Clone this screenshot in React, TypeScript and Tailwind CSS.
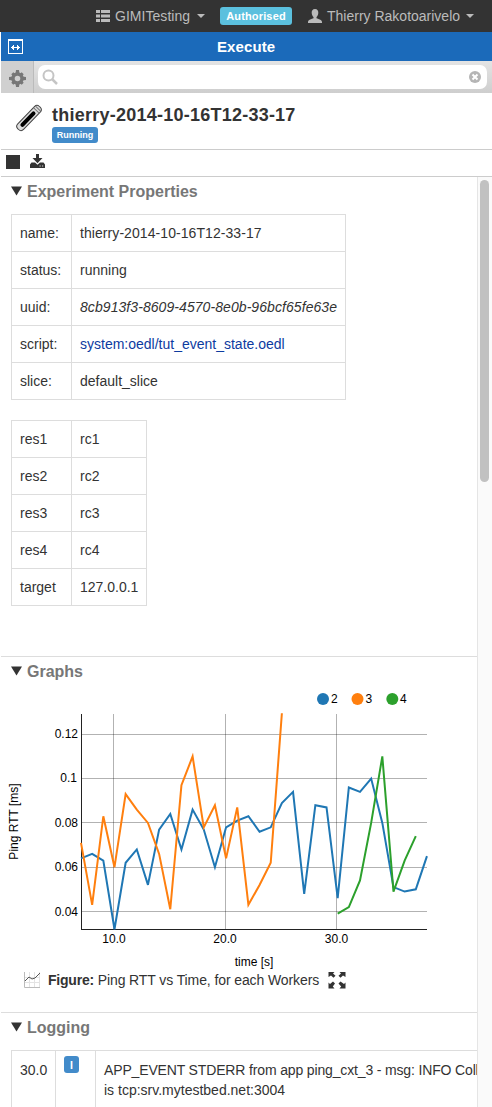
import React from "react";

const blue = [64, 66, 63, 32, 62, 68, 52, 77, 84, 68, 86, 77, 60, 78, 81, 83, 76, 78, 89, 94, 48, 88, 87, 46, 96, 94, 100, 80, 51, 49, 50, 65];
const orange = [71, 43, 83, 60, 93, 86, 80, 66, 41, 97, 110, 78, 88, 64, 87, 43, 52, 62, 129.5];
const green = [39, 42, 54, 80, 110, 49, 63, 74];

const points = (start: number, values: number[]) =>
  values.map((v, i) => `${(81 + (start + i - 7) * 11.16).toFixed(2)},${(231.5 - (v - 40) * 2.215).toFixed(2)}`).join(" ");

function Chart() {
  return (
    <svg width="476" height="290" viewBox="1 0 476 290" className="block" fontSize="12" fill="#000">
      <g stroke="#000" strokeOpacity="0.3" shapeRendering="crispEdges">
        {[54.5, 98.5, 142.5, 187.5, 231.5].map((y) => <line key={y} x1="81" x2="427" y1={y} y2={y} />)}
        {[113.5, 225.5, 336.5].map((x) => <line key={x} x1={x} x2={x} y1="34" y2="249" />)}
      </g>
      <path d="M81.5 34V249.5H427" fill="none" stroke="#222" shapeRendering="crispEdges" />
      <g fill="none" strokeWidth="2">
        <polyline points={points(7, blue)} stroke="#1f77b4" />
        <polyline points={points(7, orange)} stroke="#ff7f0e" />
        <polyline points={points(30, green)} stroke="#2ca02c" />
      </g>
      <g textAnchor="end">
        <text x="78" y="58">0.12</text>
        <text x="77" y="102">0.1</text>
        <text x="78" y="147">0.08</text>
        <text x="78" y="191">0.06</text>
        <text x="78" y="236">0.04</text>
      </g>
      <g textAnchor="middle">
        <text x="114" y="263">10.0</text>
        <text x="225" y="263">20.0</text>
        <text x="336.5" y="263">30.0</text>
        <text x="254" y="286">time [s]</text>
        <text transform="translate(18 141.5) rotate(-90)">Ping RTT [ms]</text>
      </g>
      <circle cx="323" cy="19" r="6" fill="#1f77b4" />
      <text x="331" y="23">2</text>
      <circle cx="357.5" cy="19" r="6" fill="#ff7f0e" />
      <text x="365.5" y="23">3</text>
      <circle cx="392.3" cy="19" r="6" fill="#2ca02c" />
      <text x="400" y="23">4</text>
    </svg>
  );
}

function Caret() {
  return <span className="-mt-px h-0 w-0 border-x-4 border-t-4 border-x-transparent border-t-[#bbb]" />;
}

function Heading({ children }: { children: React.ReactNode }) {
  return (
    <h2 className="flex h-[28px] items-center pl-[10px] text-[16px] font-bold text-[#777]">
      <svg width="11" height="10" className="mr-[5px]"><path d="M0 .5h11L5.5 9.5z" fill="#333" /></svg>
      <span className="pt-px">{children}</span>
    </h2>
  );
}

function Properties({ rows, last }: { rows: [string, React.ReactNode][]; last: string }) {
  return (
    <table className="ml-[10px] border-collapse">
      <tbody>
        {rows.map(([k, v]) => (
          <tr key={k} className="h-[37px]">
            <td className="w-[60px] border border-[#ddd] p-0 pl-2">{k}</td>
            <td className={`${last} border border-[#ddd] p-0 pl-2`}>{v}</td>
          </tr>
        ))}
      </tbody>
    </table>
  );
}

export default function App() {
  return (
    <div className="flex h-[1107px] w-[492px] flex-col overflow-hidden bg-white font-['Liberation_Sans',Arial,sans-serif] text-[14px] leading-5 text-[#333]">
      <header className="flex h-8 shrink-0 items-center bg-[#333] pl-[96px] text-[#bbb]">
        <svg width="14" height="12" fill="#bbb" className="-mt-px mr-[5px]">
          <path d="M0 0h4v3H0zM5 0h9v3H5zM0 4.500h4v3H0zM5 4.500h9v3H5zM0 9h4v3H0zM5 9h9v3H5z" />
        </svg>
        <span className="w-[82px] whitespace-nowrap tracking-[0.04px]">GIMITesting</span>
        <Caret />
        <span className="ml-[15px] flex h-[18px] w-[72px] items-center justify-center rounded-[3px] bg-[#5bc0de] text-[11px] font-bold tracking-[0.15px] text-white">Authorised</span>
        <svg width="14" height="14" viewBox="0 0 14 14" fill="#bbb" className="-mt-px ml-[16px] mr-[5px]">
          <path d="M7 0c2.400 0 3.500 1.700 3.300 4-.2 2-1 3.400-1.800 4v1.200c1.700.8 5.500 1.500 5.500 3.800v1H0v-1c0-2.300 3.800-3 5.500-3.800V8c-.8-.6-1.600-2-1.800-4C3.500 1.700 4.600 0 7 0z" />
        </svg>
        <span className="w-[139px] whitespace-nowrap">Thierry Rakotoarivelo</span>
        <Caret />
      </header>

      <div className="ml-px flex h-[29px] shrink-0 items-center bg-[#1b6aba] pl-[7px] text-white">
        <svg width="15" height="15" fill="none" stroke="#fff" shapeRendering="crispEdges">
          <path d="M.5 .5h14v14H.5zM0 1.500h15M3 8.500h9M5.500 6v5M4.500 7v3M9.500 6v5M10.500 7v3" />
        </svg>
        <h1 className="ml-[194px] pt-px text-[15px] font-bold tracking-[0.1px]">Execute</h1>
      </div>

      <div className="ml-px flex h-8 shrink-0 bg-gradient-to-b from-[#e4e4e4] to-[#cecece]">
        <div className="flex w-[33px] items-center justify-center border-r border-[#bbb] bg-[#d0d0d0] pt-[2px]">
          <svg width="17" height="17" viewBox="0 0 17 17">
            <path
              fill="#777"
              d="M7 0h3l.5 4h-4zM7 17h3l.5-4h-4zM0 7v3l4 .5v-4zM17 7v3l-4 .5v-4zM2.300 4.300l2-2L7.500 5 5 7.500zM12.700 2.300l2 2L12 7.500 9.500 5zM14.700 12.700l-2 2L9.500 12 12 9.500zM4.300 14.700l-2-2L5 9.500 7.500 12z"
            />
            <circle cx="8.5" cy="8.5" r="4.5" fill="#d0d0d0" stroke="#777" strokeWidth="3.4" />
          </svg>
        </div>
        <div className="my-1 ml-[4px] mr-[5px] flex flex-1 items-center rounded-[7px] bg-white pl-[4px] pr-[6px]">
          <svg width="16" height="16" fill="none" stroke="#c5c5c5" strokeWidth="2">
            <circle cx="6.5" cy="6.5" r="5" /><path d="M10 10l5 5" strokeWidth="2.5" />
          </svg>
          <svg width="12" height="12" viewBox="0 0 12 12" className="ml-auto">
            <circle cx="6" cy="6" r="6" fill="#b5b5b5" /><path d="M3.500 3.500l5 5M8.500 3.500l-5 5" stroke="#fff" strokeWidth="2" />
          </svg>
        </div>
      </div>

      <div className="ml-px flex h-[57px] shrink-0 border-b border-[#ccc] pl-[14px]">
        <svg width="28" height="28" viewBox="0 0 28 28" className="mt-[11px]">
          <g transform="translate(14 14) rotate(-46)">
            <rect x="-15.5" y="-4" width="31" height="8" rx="3.5" fill="#ddd" stroke="#444" />
            <path d="M10.500-4v8M13-3.500v7" stroke="#777" />
            <rect x="-11.5" y="-2" width="20" height="4" rx="2" fill="#000" />
          </g>
        </svg>
        <div className="ml-[9px] pt-[11px]">
          <div className="text-[18px] font-bold leading-[22px] tracking-[0.24px]">thierry-2014-10-16T12-33-17</div>
          <div className="mt-px flex h-[16px] w-[46px] items-center justify-center rounded-[3px] bg-[#428bca] text-[9px] font-bold text-white">Running</div>
        </div>
      </div>

      <div className="ml-px flex h-[27px] shrink-0 items-start border-b border-[#ccc] pl-[5px] pt-[4px]">
        <span className="mt-px h-[14px] w-[14px] bg-[#333]" />
        <svg width="15" height="14" fill="#333" className="ml-[10px]">
          <path d="M6 0h3v4h3.500L7.500 9.200 2.500 4H6z" /><path d="M1.500 8.500H5l2.500 2.200L10 8.500h3.500L15 10.500V14H0v-3.500z" /><path d="M9.500 12h1.200M12 12h1.200" stroke="#ddd" />
        </svg>
      </div>

      <main className="ml-px flex min-h-0 flex-1">
        <div className="w-[476px] shrink-0 overflow-hidden">
          <section className="h-[479px]">
            <Heading>Experiment Properties</Heading>
            <div className="pt-[9px]">
              <Properties
                last="w-[274px]"
                rows={[
                  ["name:", <span key="n" className="tracking-[0.07px]">thierry-2014-10-16T12-33-17</span>],
                  ["status:", "running"],
                  ["uuid:", <i key="u" className="tracking-[0.07px]">8cb913f3-8609-4570-8e0b-96bcf65fe63e</i>],
                  ["script:", <a key="s" className="text-[#0d3b9f]">system:oedl/tut_event_state.oedl</a>],
                  ["slice:", "default_slice"],
                ]}
              />
            </div>
            <div className="pt-5">
              <Properties last="w-[75px]" rows={[["res1", "rc1"], ["res2", "rc2"], ["res3", "rc3"], ["res4", "rc4"], ["target", "127.0.0.1"]]} />
            </div>
          </section>
          <section className="h-[356px] border-t border-[#ddd]">
            <Heading>Graphs</Heading>
            <div className="-mt-[5px]"><Chart /></div>
            <div className="flex h-5 items-center pl-[23px]">
              <svg width="16" height="16" fill="none">
                <path d="M5.500 0v16M10.500 0v16M0 5.500h16M0 10.500h16M15.500 0v16" stroke="#e3e3e3" />
                <path d="M.5 0v15.500H16" stroke="#bbb" /><path d="M1 9l4-4 3 2 3-1 5-5" stroke="#555" />
              </svg>
              <span className="ml-[8px] w-[280px] whitespace-nowrap tracking-[-0.1px]"><b className="tracking-[-0.22px]">Figure:</b> Ping RTT vs Time, for each Workers</span>
              <svg width="18" height="18" fill="#333">
                <path d="M.5 1h6L5 2.500l2.500 2.300-2 2L3 4.500.500 6zM17.500 1v5L15 4.500l-2.500 2.300-2-2L13 2.500 11.500 1zM.5 17.500v-6L2 13l3-2.500 2 2L4.800 15.500 6.500 17.500zM17.500 17.500h-6l1.700-2-2.700-3 2-2L16 13l1.500-1.500z" />
              </svg>
            </div>
          </section>
          <section className="border-t border-[#ddd]">
            <Heading>Logging</Heading>
            <div className="ml-[10px] mt-[9px] flex h-[80px] border-l border-t border-[#ddd]">
              <div className="w-[44px] shrink-0 border-r border-[#ddd] pl-2 pt-[9px]">30.0</div>
              <div className="w-[40px] shrink-0 border-r border-[#ddd] pl-2 pt-[5px]">
                <span className="flex h-[17px] w-[15px] items-center justify-center rounded-[3px] bg-[#428bca] text-[10.5px] font-bold text-white">I</span>
              </div>
              <div className="whitespace-nowrap pl-2 pt-[9px]"><span className="tracking-[-0.15px]">APP_EVENT STDERR from app ping_cxt_3 - msg: INFO Coll</span><br />is tcp:srv.mytestbed.net:3004</div>
            </div>
          </section>
        </div>
        <div className="w-[15px] shrink-0 border-l border-[#e5e5e5] bg-[#fafafa] pl-[2px] pt-[3px]">
          <div className="h-[302px] w-[9px] rounded-full bg-[#c1c1c1]" />
        </div>
      </main>
    </div>
  );
}
